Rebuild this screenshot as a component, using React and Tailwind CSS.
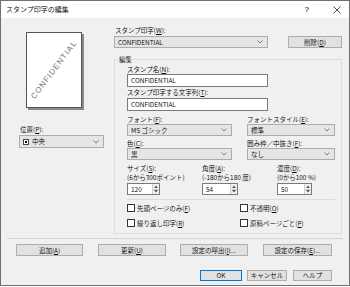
import React from "react";

const F = { fontFamily: '"Noto Sans CJK JP", "Noto Sans", sans-serif' };

function U({ c }) {
  return <span className="underline">{c}</span>;
}

function Chevron() {
  return (
    <svg width="6" height="4" viewBox="0 0 6 4" className="shrink-0">
      <path d="M0.5 0.5 L3 3 L5.5 0.5" fill="none" stroke="#666" strokeWidth="0.8" />
    </svg>
  );
}

function Select({ w, children, h = "h-[12px]" }) {
  return (
    <div className={`${w} ${h} bg-[#e5e5e5] border border-[#acacac] flex items-center pl-[3px] pr-[4px]`}>
      <div className="flex-1 flex items-center leading-none">{children}</div>
      <Chevron />
    </div>
  );
}

function Input({ children }) {
  return (
    <div className="w-[141px] h-[13px] bg-white border border-[#7a7a7a] flex items-center pl-[3px] leading-none">
      {children}
    </div>
  );
}

function Spin({ w, v }) {
  return (
    <div className={`${w} h-[12px] bg-white border border-[#7a7a7a] flex`}>
      <div className="flex-1 flex items-center pl-[3px] leading-none">{v}</div>
      <div className="w-[7px] flex flex-col border-l border-[#cfcfcf] bg-[#f3f3f3]">
        <div className="flex-1 flex items-center justify-center border-b border-[#cfcfcf]">
          <svg width="4" height="3" viewBox="0 0 4 3"><path d="M0 3 L2 0.5 L4 3 Z" fill="#555" /></svg>
        </div>
        <div className="flex-1 flex items-center justify-center">
          <svg width="4" height="3" viewBox="0 0 4 3"><path d="M0 0 L2 2.5 L4 0 Z" fill="#555" /></svg>
        </div>
      </div>
    </div>
  );
}

function Btn({ w, h = "h-[12px]", children, cls = "", def = false }) {
  return (
    <div
      className={`${w} ${h} ${cls} flex items-center justify-center leading-none bg-[#e1e1e1] border ${
        def ? "border-[#0078d7]" : "border-[#adadad]"
      }`}
    >
      {children}
    </div>
  );
}

function Label({ children, cls = "" }) {
  return <div className={`h-[9px] leading-[9px] whitespace-nowrap ${cls}`}>{children}</div>;
}

function Check({ children }) {
  return (
    <div className="flex items-center h-[10px] leading-none whitespace-nowrap">
      <div className="w-[8px] h-[8px] border border-[#333] bg-white mr-[2px]" />
      {children}
    </div>
  );
}

export default function App() {
  return (
    <div className="w-[350px] h-[287px] bg-white text-black text-[6.5px] font-[350]" style={F}>
      <div className="w-[350px] h-[286px] border border-[#707070] flex flex-col bg-[#f0f0f0]">
        {/* title bar */}
        <div className="h-[17px] bg-white flex items-center pl-[5px] shrink-0">
          <span className="text-[7px] leading-none">スタンプ印字の編集</span>
          <span className="ml-auto text-[8px] leading-none" style={{ fontFamily: '"Liberation Sans", sans-serif' }}>?</span>
          <svg width="8" height="8" viewBox="0 0 8 8" className="ml-[24px] mr-[8px]">
            <path d="M0.5 0.5 L7.5 7.5 M7.5 0.5 L0.5 7.5" stroke="#222" strokeWidth="0.8" />
          </svg>
        </div>

        {/* body */}
        <div className="flex flex-col">
          <div className="flex pl-[18px]">
            {/* left column */}
            <div className="w-[85px] flex flex-col">
              <div className="ml-[7px] mt-[14px] w-[56px] h-[76px] border border-[#555] bg-white shadow-[2px_2px_0_#8a8a8a] flex items-center justify-center overflow-hidden">
                <div
                  className="text-[8px] leading-none text-[#777] whitespace-nowrap -rotate-[53deg] tracking-[1px] font-normal"
                  style={{ fontFamily: '"Liberation Sans", sans-serif' }}
                >
                  CONFIDENTIAL
                </div>
              </div>
              <div className="mt-[16px] h-[10px] leading-[10px] pl-[1px]">
                位置(<U c="P" />):
              </div>
              <div className="mt-[1px]">
                <Select w="w-[85px]" h="h-[13px]">
                  <div className="w-[6px] h-[6px] border border-[#444] bg-white flex items-center justify-center mr-[3px]">
                    <div className="w-[2px] h-[2px] bg-black" />
                  </div>
                  中央
                </Select>
              </div>
            </div>

            {/* right column */}
            <div className="ml-[10px] w-[228px] flex flex-col">
              <Label cls="mt-[8px] pl-[1px]">
                スタンプ印字(<U c="W" />):
              </Label>
              <div className="mt-[1px] flex">
                <Select w="w-[154px]">CONFIDENTIAL</Select>
                <Btn w="w-[54px]" cls="ml-[20px]">
                  削除(<U c="D" />)
                </Btn>
              </div>

              {/* group box */}
              <div className="relative mt-[11px] w-[228px] h-[175px] border border-[#dcdcdc] pl-[12px] flex flex-col">
                <div className="absolute left-[3px] -top-[5px] px-[1px] bg-[#f0f0f0] h-[9px] leading-[9px]">編集</div>

                <Label cls="mt-[5px]">
                  スタンプ名(<U c="N" />):
                </Label>
                <Input>CONFIDENTIAL</Input>
                <Label cls="mt-[1px]">
                  スタンプ印字する文字列(<U c="T" />):
                </Label>
                <div className="mt-[1px]">
                  <Input>CONFIDENTIAL</Input>
                </div>

                <div className="flex mt-[4px]">
                  <div className="w-[120px] flex flex-col">
                    <Label>
                      フォント(<U c="F" />):
                    </Label>
                    <Select w="w-[105px]">MS ゴシック</Select>
                    <Label cls="mt-[3px]">
                      色(<U c="C" />):
                    </Label>
                    <Select w="w-[105px]">黒</Select>
                  </div>
                  <div className="flex flex-col">
                    <Label>
                      フォントスタイル(<U c="E" />):
                    </Label>
                    <Select w="w-[88px]">標準</Select>
                    <Label cls="mt-[3px]">
                      囲み枠／中抜き(<U c="F" />):
                    </Label>
                    <Select w="w-[88px]">なし</Select>
                  </div>
                </div>

                <div className="flex mt-[4px]">
                  <div className="w-[75px] flex flex-col">
                    <Label>
                      サイズ(<U c="S" />):
                    </Label>
                    <Label>(6から300ポイント)</Label>
                    <div className="mt-[1px]">
                      <Spin w="w-[33px]" v="120" />
                    </div>
                  </div>
                  <div className="w-[75px] flex flex-col">
                    <Label>
                      角度(<U c="A" />):
                    </Label>
                    <Label>(-180から180 度)</Label>
                    <div className="mt-[1px]">
                      <Spin w="w-[36px]" v="54" />
                    </div>
                  </div>
                  <div className="flex flex-col">
                    <Label>
                      濃度(<U c="D" />):
                    </Label>
                    <Label>(0から100 %)</Label>
                    <div className="mt-[1px]">
                      <Spin w="w-[35px]" v="50" />
                    </div>
                  </div>
                </div>

                <div className="mt-[4px] w-[208px] h-px bg-[#dcdcdc]" />

                <div className="flex mt-[3px]">
                  <div className="w-[113px] flex flex-col gap-[5px]">
                    <Check>
                      先頭ページのみ(<U c="F" />)
                    </Check>
                    <Check>
                      繰り返し印字(<U c="R" />)
                    </Check>
                  </div>
                  <div className="flex flex-col gap-[5px]">
                    <Check>
                      不透明(<U c="O" />)
                    </Check>
                    <Check>
                      原稿ページごと(<U c="P" />)
                    </Check>
                  </div>
                </div>
              </div>
            </div>
          </div>

          {/* separator */}
          <div className="mt-[4px] ml-[6px] w-[336px] h-px bg-[#d5d5d5]" />

          {/* buttons row 1 */}
          <div className="mt-[5px] flex pl-[15px]">
            <Btn w="w-[67px]">
              追加(<U c="A" />)
            </Btn>
            <Btn w="w-[68px]" cls="ml-[15px]">
              更新(<U c="U" />)
            </Btn>
            <Btn w="w-[68px]" cls="ml-[14px]">
              設定の呼出(<U c="I" />)...
            </Btn>
            <Btn w="w-[69px]" cls="ml-[15px]">
              設定の保存(<U c="E" />)...
            </Btn>
          </div>

          {/* buttons row 2 */}
          <div className="mt-[14px] flex pl-[199px]">
            <Btn w="w-[42px]" h="h-[11px]" def>
              OK
            </Btn>
            <Btn w="w-[40px]" h="h-[11px]" cls="ml-[5px]">
              キャンセル
            </Btn>
            <Btn w="w-[39px]" h="h-[11px]" cls="ml-[6px]">
              ヘルプ
            </Btn>
          </div>
        </div>
      </div>
    </div>
  );
}
